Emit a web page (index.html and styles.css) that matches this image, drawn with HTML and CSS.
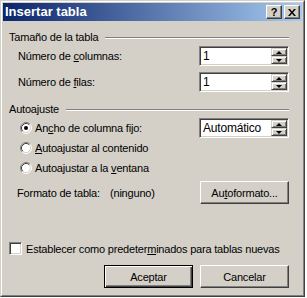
FILE: index.html
```html
<html>
    <head>
        <link rel="stylesheet" href="styles.css">
    </head>
    <body>
        <div class="window">
            <div class="frame">
                <div class="titlebar">
                    <span class="title">Insertar tabla</span>
                    <div class="caption">
                        <span class="cap-btn help">?</span>
                        <span class="cap-btn close">
                            <svg width="8" height="7" viewBox="0 0 8 7"><path d="M0 0h2l2 2.5 2-2.5h2l-3 3.5 3 3.5h-2l-2-2.5-2 2.5h-2l3-3.5z" fill="#000"/></svg>
                        </span>
                    </div>
                </div>

                <div class="content">
                    <div class="group-head g1"><span>Tamaño de la tabla</span><div class="etch"></div></div>

                    <div class="field-row r1">
                        <span class="label">Número de <u>c</u>olumnas:</span>
                        <div class="spin"><span class="val">1</span><div class="arrows"><span class="arr up"></span><span class="arr down"></span></div></div>
                    </div>
                    <div class="field-row r2">
                        <span class="label">Número de <u>f</u>ilas:</span>
                        <div class="spin"><span class="val">1</span><div class="arrows"><span class="arr up"></span><span class="arr down"></span></div></div>
                    </div>

                    <div class="group-head g2"><span>Autoajuste</span><div class="etch"></div></div>

                    <div class="radio-row first">
                        <svg class="radio" width="12" height="12" viewBox="0 0 12 12">
                            <circle cx="6" cy="6" r="5" fill="#fff"/>
                            <path d="M2.11 9.89A5.5 5.5 0 0 1 9.89 2.11" stroke="#808080" fill="none"/>
                            <path d="M9.89 2.11A5.5 5.5 0 0 1 2.11 9.89" stroke="#fff" fill="none"/>
                            <path d="M2.82 9.18A4.5 4.5 0 0 1 9.18 2.82" stroke="#404040" fill="none"/>
                            <path d="M9.18 2.82A4.5 4.5 0 0 1 2.82 9.18" stroke="#d4d0c8" fill="none"/>
                            <circle cx="6" cy="6" r="2" fill="#000"/>
                        </svg>
                        <span class="rlabel">An<u>c</u>ho de columna fijo:</span>
                        <div class="spin"><span class="val">Automático</span><div class="arrows"><span class="arr up"></span><span class="arr down"></span></div></div>
                    </div>
                    <div class="radio-row">
                        <svg class="radio" width="12" height="12" viewBox="0 0 12 12">
                            <circle cx="6" cy="6" r="5" fill="#fff"/>
                            <path d="M2.11 9.89A5.5 5.5 0 0 1 9.89 2.11" stroke="#808080" fill="none"/>
                            <path d="M9.89 2.11A5.5 5.5 0 0 1 2.11 9.89" stroke="#fff" fill="none"/>
                            <path d="M2.82 9.18A4.5 4.5 0 0 1 9.18 2.82" stroke="#404040" fill="none"/>
                            <path d="M9.18 2.82A4.5 4.5 0 0 1 2.82 9.18" stroke="#d4d0c8" fill="none"/>
                        </svg>
                        <span class="rlabel"><u>A</u>utoajustar al contenido</span>
                    </div>
                    <div class="radio-row">
                        <svg class="radio" width="12" height="12" viewBox="0 0 12 12">
                            <circle cx="6" cy="6" r="5" fill="#fff"/>
                            <path d="M2.11 9.89A5.5 5.5 0 0 1 9.89 2.11" stroke="#808080" fill="none"/>
                            <path d="M9.89 2.11A5.5 5.5 0 0 1 2.11 9.89" stroke="#fff" fill="none"/>
                            <path d="M2.82 9.18A4.5 4.5 0 0 1 9.18 2.82" stroke="#404040" fill="none"/>
                            <path d="M9.18 2.82A4.5 4.5 0 0 1 2.82 9.18" stroke="#d4d0c8" fill="none"/>
                        </svg>
                        <span class="rlabel">Autoajustar a la <u>v</u>entana</span>
                    </div>

                    <div class="format-row">
                        <span class="flabel">Formato de tabla:</span>
                        <span class="fval">(ninguno)</span>
                        <span class="btn auto">Au<u>t</u>oformato...</span>
                    </div>

                    <div class="check-row">
                        <span class="check"></span>
                        <span class="ctext">Establecer como predeter<u>m</u>inados para tablas nuevas</span>
                    </div>

                    <div class="button-row">
                        <span class="btn default">Aceptar</span>
                        <span class="btn">Cancelar</span>
                    </div>
                </div>
            </div>
        </div>
    </body>
</html>
```

FILE: styles.css
```css
html, body {
    margin: 0;
    background: #fff;
}

body {
    font-family: "Liberation Sans", Arial, sans-serif;
    font-size: 11px;
    letter-spacing: -0.2px;
    color: #000;
}

.window {
    width: 305px;
    height: 297px;
    box-sizing: border-box;
    border: 1px solid;
    border-color: #d4d0c8 #404040 #404040 #d4d0c8;
    background: #d4d0c8;
}

.frame {
    height: 100%;
    box-sizing: border-box;
    border: 1px solid;
    border-color: #fff #808080 #808080 #fff;
    padding: 1px;
}

.titlebar {
    height: 18px;
    display: flex;
    align-items: center;
    background: linear-gradient(to right, #0a246a, #a6caf0);
    padding: 0 2px 0 2px;
}

.title {
    flex: 1;
    color: #fff;
    font-weight: bold;
    font-size: 13px;
    letter-spacing: 0;
    line-height: 18px;
}

.caption {
    display: flex;
    gap: 2px;
}

.cap-btn {
    width: 16px;
    height: 14px;
    box-sizing: border-box;
    display: flex;
    align-items: center;
    justify-content: center;
    background: #d4d0c8;
    border: 1px solid;
    border-color: #fff #404040 #404040 #fff;
    box-shadow: inset -1px -1px #808080;
    font-weight: bold;
    font-size: 11px;
    line-height: 12px;
}

.content {
    padding: 0 13px 0 6px;
}

.group-head {
    display: flex;
    align-items: center;
    gap: 7px;
    height: 13px;
    line-height: 13px;
}

.g1 {
    margin-top: 10px;
}

.g2 {
    margin-top: 11px;
}

.etch {
    flex: 1;
    border-top: 1px solid #808080;
    border-bottom: 1px solid #fff;
}

.field-row {
    display: flex;
    align-items: center;
    padding-left: 9px;
}

.r1 {
    margin-top: 2px;
}

.r2 {
    margin-top: 6px;
}

.label {
    flex: 1;
}

.spin {
    width: 90px;
    height: 20px;
    box-sizing: border-box;
    display: flex;
    align-items: center;
    background: #fff;
    border: 1px solid;
    border-color: #808080 #fff #fff #808080;
    box-shadow: inset 1px 1px #404040, inset -1px -1px #d4d0c8;
    padding: 1px 1px 1px 3px;
}

.val {
    flex: 1;
    font-size: 12px;
}

.arrows {
    display: flex;
    flex-direction: column;
    width: 16px;
    height: 16px;
}

.arr {
    height: 8px;
    box-sizing: border-box;
    background: #d4d0c8;
    border: 1px solid;
    border-color: #d4d0c8 #404040 #404040 #d4d0c8;
    box-shadow: inset 1px 1px #fff, inset -1px -1px #808080;
    position: relative;
}

.arr::after {
    content: "";
    position: absolute;
    left: 4px;
    width: 0;
    height: 0;
    border-left: 3px solid transparent;
    border-right: 3px solid transparent;
}

.up::after {
    top: 2px;
    border-bottom: 3px solid #000;
}

.down::after {
    top: 2px;
    border-top: 3px solid #000;
}

.radio-row {
    display: flex;
    align-items: center;
    height: 20px;
    padding-left: 11px;
}

.radio-row.first {
    margin-top: 2px;
}

.radio {
    margin-right: 3px;
}

.rlabel {
    flex: 1;
}

.format-row {
    display: flex;
    align-items: center;
    margin-top: 3px;
    padding-left: 8px;
}

.flabel {
    width: 93px;
}

.fval {
    flex: 1;
}

.btn {
    width: 89px;
    height: 23px;
    box-sizing: border-box;
    display: flex;
    align-items: center;
    justify-content: center;
    border: 1px solid;
    border-color: #fff #404040 #404040 #fff;
    box-shadow: inset -1px -1px #808080;
}

.btn.default {
    border-color: #000;
    box-shadow: inset 1px 1px #fff, inset -1px -1px #404040, inset -2px -2px #808080;
}

.check-row {
    display: flex;
    align-items: center;
    gap: 4px;
    margin-top: 38px;
}

.ctext {
    white-space: nowrap;
}

.check {
    width: 13px;
    height: 13px;
    box-sizing: border-box;
    background: #fff;
    border: 1px solid;
    border-color: #808080 #fff #fff #808080;
    box-shadow: inset 1px 1px #404040, inset -1px -1px #d4d0c8;
}

.button-row {
    display: flex;
    justify-content: flex-end;
    gap: 7px;
    margin-top: 10px;
}
```
